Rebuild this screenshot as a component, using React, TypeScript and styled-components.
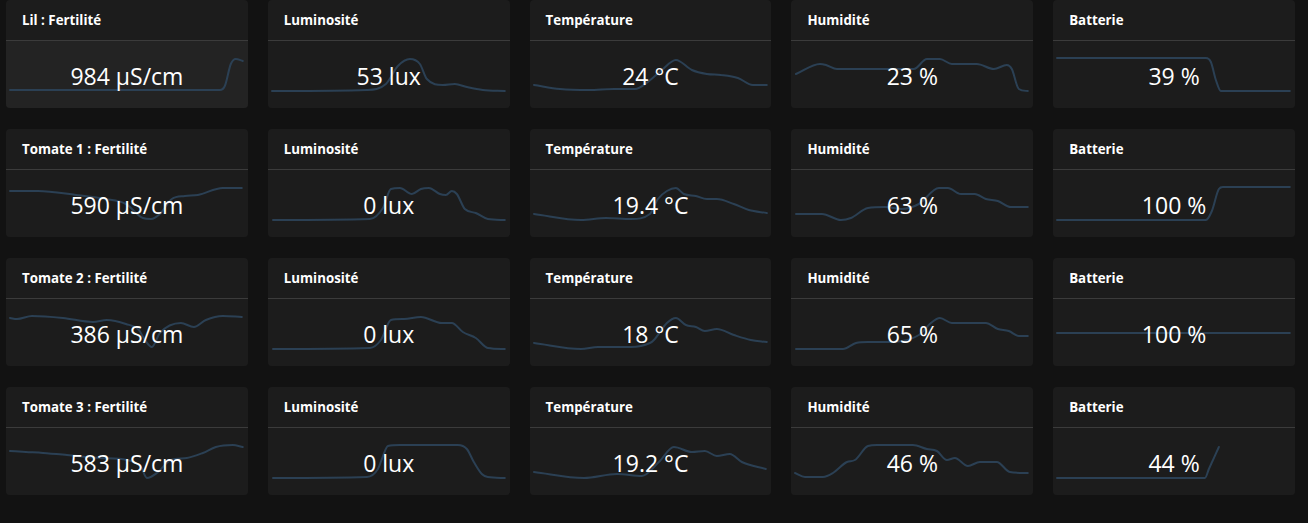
import React from 'react'
import styled, { createGlobalStyle } from 'styled-components'

type Pt = [number, number]

type Sensor = {
  title: string
  value: string
  points: Pt[]
  active?: boolean
}

const GlobalStyle = createGlobalStyle`
  html, body {
    margin: 0;
    padding: 0;
    background: #121212;
  }
  body {
    font-family: "Open Sans", "Noto Sans", sans-serif;
    overflow: hidden;
  }
`

const Grid = styled.div`
  display: grid;
  grid-template-columns: repeat(5, 1fr);
  column-gap: 20px;
  row-gap: 21px;
  width: 1289px;
  margin-left: 6px;
`

const Card = styled.div`
  display: flex;
  flex-direction: column;
  height: 108px;
  background: #1c1c1c;
  border-radius: 4px;
  overflow: hidden;
`

const Header = styled.div`
  display: flex;
  align-items: center;
  height: 40px;
  padding: 0 16px;
  border-bottom: 1px solid #3b3b3b;
  color: #ffffff;
  font-size: 13.3px;
  font-weight: 700;
`

const Body = styled.div<{ $active?: boolean }>`
  position: relative;
  flex: 1;
  display: flex;
  align-items: center;
  justify-content: center;
  background: ${(p) => (p.$active ? '#232323' : '#1c1c1c')};
`

const Spark = styled.svg`
  position: absolute;
  inset: 0;
  width: 100%;
  height: 100%;
`

const Value = styled.span`
  position: relative;
  z-index: 1;
  margin-top: 3px;
  color: #ffffff;
  font-size: 23px;
  font-weight: 400;
`

// monotone cubic, same idea as d3 curveMonotoneX
function monotonePath(pts: Pt[]): string {
  const n = pts.length
  if (n < 2) return ''
  const m: number[] = []
  for (let i = 0; i < n - 1; i++) {
    m.push((pts[i + 1][1] - pts[i][1]) / (pts[i + 1][0] - pts[i][0]))
  }
  const t: number[] = [m[0]]
  for (let i = 1; i < n - 1; i++) {
    t.push(m[i - 1] * m[i] <= 0 ? 0 : (m[i - 1] + m[i]) / 2)
  }
  t.push(m[n - 2])
  for (let i = 0; i < n - 1; i++) {
    if (m[i] === 0) {
      t[i] = 0
      t[i + 1] = 0
      continue
    }
    const a = t[i] / m[i]
    const b = t[i + 1] / m[i]
    const s = a * a + b * b
    if (s > 9) {
      const tau = 3 / Math.sqrt(s)
      t[i] = tau * a * m[i]
      t[i + 1] = tau * b * m[i]
    }
  }
  let d = `M${pts[0][0]},${pts[0][1]}`
  for (let i = 0; i < n - 1; i++) {
    const [x0, y0] = pts[i]
    const [x1, y1] = pts[i + 1]
    const h = (x1 - x0) / 3
    d += ` C${x0 + h},${y0 + t[i] * h} ${x1 - h},${y1 - t[i + 1] * h} ${x1},${y1}`
  }
  return d
}

const sensors: Sensor[] = [
  { title: 'Lil : Fertilité', value: '984 µS/cm', active: true, points: [[4, 90], [120, 90], [214, 90], [219, 86], [225, 64], [230, 59], [237, 61]] },
  { title: 'Luminosité', value: '53 lux', points: [[4, 91], [99, 90], [118, 84], [130, 66], [142, 59], [152, 64], [159, 79], [175, 85], [187, 84], [199, 87], [215, 90], [237, 91]] },
  { title: 'Température', value: '24 °C', points: [[4, 85], [30, 89], [59, 90], [84, 89], [105, 89], [118, 82], [132, 70], [146, 60], [162, 70], [177, 74], [191, 75], [208, 78], [223, 85], [237, 85]] },
  { title: 'Humidité', value: '23 %', points: [[5, 74], [29, 64], [35, 65], [46, 69], [69, 69], [123, 69], [136, 59], [149, 59], [161, 64], [186, 64], [203, 69], [216, 65], [221, 69], [228, 89], [237, 91]] },
  { title: 'Batterie', value: '39 %', points: [[4, 58], [153, 58], [158, 62], [163, 80], [168, 91], [237, 91]] },

  { title: 'Tomate 1 : Fertilité', value: '590 µS/cm', points: [[4, 62], [32, 62], [70, 66], [99, 70], [120, 75], [137, 89], [145, 90], [154, 85], [166, 70], [179, 67], [192, 66], [217, 59], [236, 59]] },
  { title: 'Luminosité', value: '0 lux', points: [[5, 91], [102, 90], [115, 79], [123, 60], [132, 59], [144, 65], [153, 60], [161, 59], [172, 65], [178, 66], [184, 62], [189, 65], [197, 80], [208, 84], [220, 90], [237, 91]] },
  { title: 'Température', value: '19.4 °C', points: [[4, 85], [51, 91], [76, 89], [101, 90], [120, 85], [128, 70], [137, 62], [146, 59], [154, 65], [166, 67], [177, 70], [187, 70], [204, 75], [219, 81], [237, 84]] },
  { title: 'Humidité', value: '63 %', points: [[5, 85], [31, 85], [50, 91], [60, 89], [77, 79], [94, 78], [111, 80], [128, 75], [148, 59], [157, 59], [170, 65], [184, 65], [195, 70], [207, 72], [220, 78], [237, 78]] },
  { title: 'Batterie', value: '100 %', points: [[4, 91], [153, 91], [159, 82], [166, 60], [170, 58], [237, 58]] },

  { title: 'Tomate 2 : Fertilité', value: '386 µS/cm', points: [[4, 60], [11, 61], [26, 58], [57, 60], [87, 64], [101, 62], [120, 66], [133, 72], [139, 82], [146, 89], [154, 75], [175, 65], [188, 69], [200, 62], [217, 58], [236, 59]] },
  { title: 'Luminosité', value: '0 lux', points: [[5, 91], [102, 90], [113, 82], [123, 62], [136, 61], [153, 59], [174, 65], [184, 65], [195, 74], [208, 80], [220, 90], [237, 91]] },
  { title: 'Température', value: '18 °C', points: [[4, 85], [51, 91], [68, 89], [101, 89], [120, 85], [124, 82], [137, 65], [146, 60], [156, 67], [166, 69], [175, 73], [187, 71], [204, 77], [221, 82], [237, 84]] },
  { title: 'Humidité', value: '65 %', points: [[5, 91], [52, 91], [65, 85], [77, 84], [94, 84], [128, 77], [140, 65], [149, 60], [161, 65], [195, 65], [207, 71], [218, 73], [228, 78], [237, 78]] },
  { title: 'Batterie', value: '100 %', points: [[4, 75], [237, 75]] },

  { title: 'Tomate 3 : Fertilité', value: '583 µS/cm', points: [[4, 64], [20, 65], [37, 66], [61, 68], [94, 71], [121, 73], [135, 80], [141, 91], [151, 86], [165, 73], [181, 71], [197, 66], [210, 60], [227, 58], [237, 60]] },
  { title: 'Luminosité', value: '0 lux', points: [[5, 91], [99, 90], [110, 82], [114, 72], [120, 59], [132, 58], [190, 58], [199, 62], [206, 75], [214, 87], [220, 90], [237, 91]] },
  { title: 'Température', value: '19.2 °C', points: [[4, 85], [54, 91], [87, 87], [112, 89], [129, 75], [144, 60], [162, 65], [175, 64], [187, 69], [200, 67], [212, 75], [236, 82]] },
  { title: 'Humidité', value: '46 %', points: [[4, 86], [14, 90], [32, 90], [42, 86], [56, 75], [64, 73], [77, 59], [86, 58], [122, 58], [136, 62], [146, 64], [156, 73], [164, 71], [177, 79], [189, 75], [206, 75], [219, 85], [237, 86]] },
  { title: 'Batterie', value: '44 %', points: [[4, 91], [152, 91], [156, 82], [166, 60]] },
]

const SensorCard = ({ sensor }: { sensor: Sensor }) => (
  <Card>
    <Header>{sensor.title}</Header>
    <Body $active={sensor.active}>
      <Spark viewBox="0 41 242 67" preserveAspectRatio="none">
        <path
          d={monotonePath(sensor.points)}
          fill="none"
          stroke="#2b4054"
          strokeWidth={2}
          vectorEffect="non-scaling-stroke"
          strokeLinejoin="round"
          strokeLinecap="round"
        />
      </Spark>
      <Value>{sensor.value}</Value>
    </Body>
  </Card>
)

export default function App() {
  return (
    <>
      <GlobalStyle />
      <Grid>
        {sensors.map((s, i) => (
          <SensorCard key={i} sensor={s} />
        ))}
      </Grid>
    </>
  )
}
